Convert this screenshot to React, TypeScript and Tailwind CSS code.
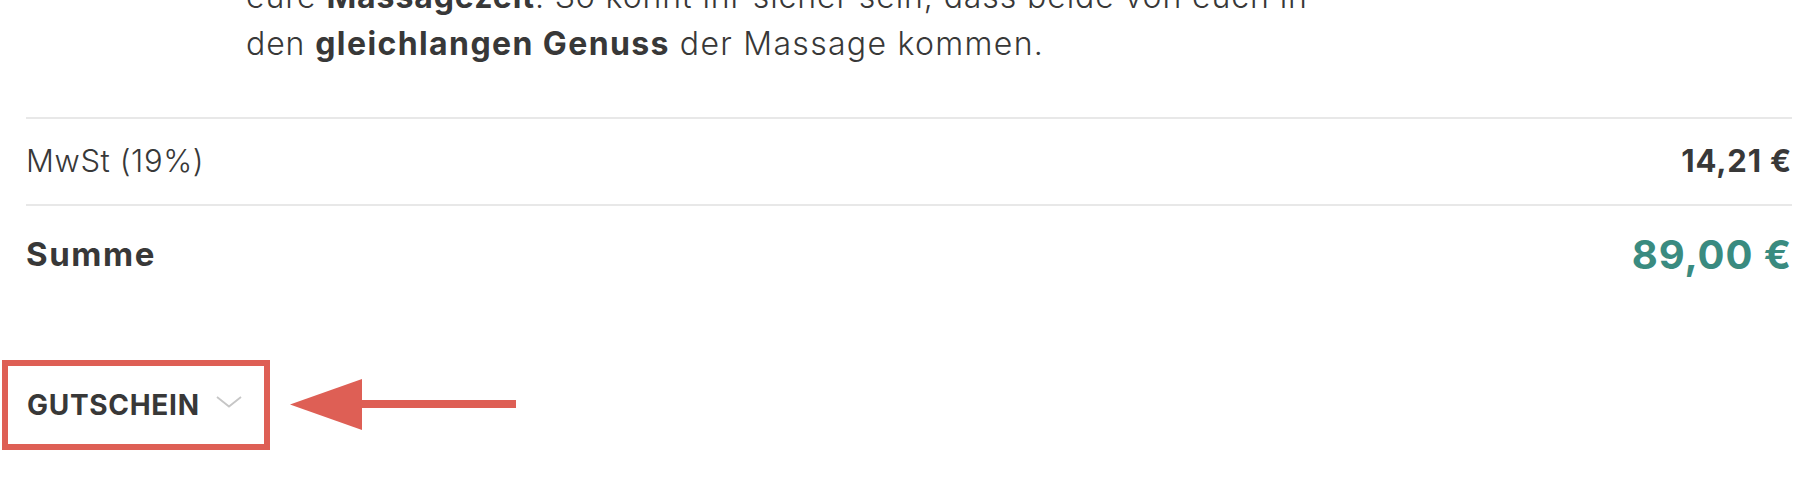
import React from 'react';

function Chevron() {
  return (
    <svg width="26" height="12" viewBox="0 0 26 12" fill="none" className="ml-[16px] mt-[-6px]">
      <polyline points="1,1 13,10.5 25,1" stroke="#c6c6c6" strokeWidth="1.8" />
    </svg>
  );
}

function Arrow() {
  return (
    <svg width="226" height="52" viewBox="0 0 226 52" className="ml-[20px]">
      <rect x="70" y="21" width="156" height="8" fill="#de5f55" />
      <polygon points="0,25.5 72,0 72,51" fill="#de5f55" />
    </svg>
  );
}

export default function App() {
  return (
    <div className="w-[1810px] h-[500px] overflow-hidden bg-white font-['Inter',sans-serif] text-[#383838]">
      {/* Produktbeschreibung (Ende) */}
      <p className="mt-[-27px] pl-[246px] text-[32px] leading-[47px] font-light tracking-[0.9px]">
        eure <strong className="font-bold">Massagezeit</strong>. So könnt ihr sicher sein, dass beide von euch in
        <br />
        den <strong className="font-bold tracking-[1.4px]">gleichlangen Genuss</strong>{' '}
        <span className="tracking-[1.3px]">der Massage kommen.</span>
      </p>

      {/* Summen */}
      <div className="mt-[50px] ml-[26px] mr-[18px]">
        <div className="h-[2px] bg-[#e8e8e8]" />
        <div className="flex h-[85px] items-center justify-between">
          <span className="text-[31px] font-light tracking-[0.6px]">MwSt (19%)</span>
          <span className="text-[31px] font-bold tracking-[0.8px]">14,21 €</span>
        </div>
        <div className="h-[2px] bg-[#e8e8e8]" />
        <div className="flex h-[98px] items-center justify-between">
          <span className="text-[33px] font-bold tracking-[1.6px]">Summe</span>
          <span className="text-[40px] font-bold tracking-[0.9px] text-[#3a8b80]">89,00 €</span>
        </div>
      </div>

      {/* Gutschein */}
      <div className="mt-[56px] ml-[2px] flex items-center">
        <div className="flex h-[90px] w-[268px] items-center border-[6px] border-[#de5f55] pl-[19px]">
          <span className="text-[28px] font-bold uppercase tracking-[0.7px]">Gutschein</span>
          <Chevron />
        </div>
        <Arrow />
      </div>
    </div>
  );
}
